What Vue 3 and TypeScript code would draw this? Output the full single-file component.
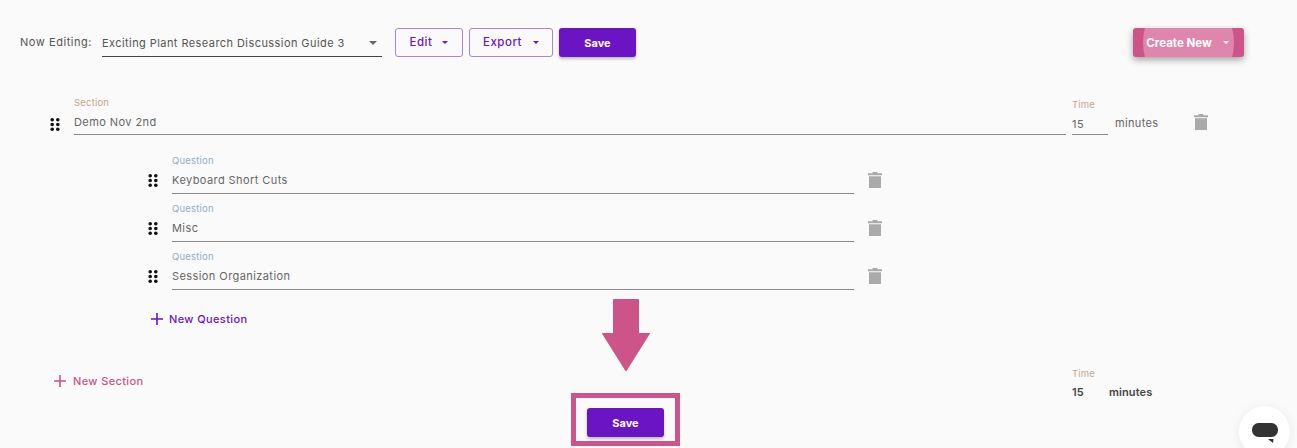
<script setup lang="ts">
const questions: string[] = ['Keyboard Short Cuts', 'Misc', 'Session Organization']
</script>

<template>
  <div class="page">
    <header class="topbar">
      <span class="now">Now Editing:</span>
      <div class="select">
        <span>Exciting Plant Research Discussion Guide 3</span>
        <i class="caret grey"></i>
      </div>
      <button class="btn outline edit">Edit<i class="caret purple"></i></button>
      <button class="btn outline export">Export<i class="caret purple"></i></button>
      <button class="btn solid">Save</button>
      <button class="btn create"><span class="ripple"></span><span class="create-text">Create New</span><i class="caret white"></i></button>
    </header>

    <section class="section-row">
      <svg class="grip" viewBox="0 0 10 13" width="10" height="13"><g fill="#111"><circle cx="2.200" cy="1.800" r="1.800"/><circle cx="7.800" cy="1.800" r="1.800"/><circle cx="2.200" cy="6.500" r="1.800"/><circle cx="7.800" cy="6.500" r="1.800"/><circle cx="2.200" cy="11.200" r="1.800"/><circle cx="7.800" cy="11.200" r="1.800"/></g></svg>
      <div class="field section-field">
        <label class="section-label">Section</label>
        <div class="value">Demo Nov 2nd</div>
      </div>
      <div class="field time-field">
        <label class="section-label">Time</label>
        <div class="value">15</div>
      </div>
      <span class="minutes">minutes</span>
      <svg class="trash section-trash" viewBox="0 0 14 16" width="14" height="16"><path fill="#aaa" d="M5 0h4l.7 1.200H14v2H0v-2h4.300zM1 4.200h12V16H1z"/></svg>
    </section>

    <div class="questions">
      <div v-for="q in questions" :key="q" class="question-row">
        <svg class="grip" viewBox="0 0 10 13" width="10" height="13"><g fill="#111"><circle cx="2.200" cy="1.800" r="1.800"/><circle cx="7.800" cy="1.800" r="1.800"/><circle cx="2.200" cy="6.500" r="1.800"/><circle cx="7.800" cy="6.500" r="1.800"/><circle cx="2.200" cy="11.200" r="1.800"/><circle cx="7.800" cy="11.200" r="1.800"/></g></svg>
        <div class="field question-field">
          <label class="question-label">Question</label>
          <div class="value">{{ q }}</div>
        </div>
        <svg class="trash" viewBox="0 0 14 16" width="14" height="16"><path fill="#aaa" d="M5 0h4l.7 1.200H14v2H0v-2h4.300zM1 4.200h12V16H1z"/></svg>
      </div>
      <button class="add new-question">
        <svg viewBox="0 0 12 12" width="12" height="12"><path d="M6 0v12M0 6h12" stroke="#6a14c4" stroke-width="1.600" fill="none"/></svg>
        New Question
      </button>
    </div>

    <footer class="footer">
      <button class="add new-section">
        <svg viewBox="0 0 12 12" width="12" height="12"><path d="M6 0v12M0 6h12" stroke="#cc5488" stroke-width="1.600" fill="none"/></svg>
        New Section
      </button>
      <div class="total">
        <label class="section-label">Time</label>
        <div class="total-row"><b class="total-num">15</b><b>minutes</b></div>
      </div>
    </footer>

    <svg class="arrow" viewBox="0 0 48 72" width="48" height="72"><path fill="#cc5488" d="M11 1a1 1 0 0 1 1-1h24a1 1 0 0 1 1 1v33h10.500a.5.5 0 0 1 .4.800L24.500 72h-1L.1 34.800a.5.5 0 0 1 .4-.800H11z"/></svg>
    <div class="highlight"><button class="btn solid">Save</button></div>

    <div class="chat">
      <svg viewBox="0 0 26 20" width="26" height="20"><rect width="26" height="14" rx="6.500" fill="#333"/><path fill="#333" d="M16 16h5.500l-.5 4z"/></svg>
    </div>
  </div>
</template>

<style scoped>
.page {
  position: relative;
  width: 1297px;
  height: 448px;
  overflow: hidden;
  background: #fafafa;
  font-family: Inter, "Liberation Sans", sans-serif;
  font-size: 11px;
  color: #666;
  box-sizing: border-box;
}
.topbar {
  display: flex;
  align-items: center;
  height: 29px;
  padding: 28px 53px 0 20px;
}
.now { width: 82px; margin-top: -2px; color: #555; letter-spacing: 0.55px; }
.select {
  width: 280px;
  height: 25px;
  margin-top: 3px;
  box-sizing: border-box;
  border-bottom: 1px solid #444;
  display: flex;
  align-items: center;
  justify-content: space-between;
  padding: 0 5px 2px 0;
  color: #555;
  letter-spacing: 0.43px;
}
.btn {
  height: 29px;
  box-sizing: border-box;
  border-radius: 3px;
  font-family: inherit;
  font-size: 11px;
  font-weight: 500;
  display: inline-flex;
  align-items: center;
  justify-content: center;
  padding: 0;
  border: none;
}
.outline {
  background: transparent;
  border: 1px solid #a883dc;
  color: #6a14c4;
  font-size: 11.500px;
  font-weight: 500;
  letter-spacing: 0.5px;
  gap: 10px;
  padding-bottom: 1px;
}
.edit { width: 68px; margin-left: 13px; }
.export { width: 84px; margin-left: 6px; gap: 11px; }
.solid {
  width: 77px;
  background: #6a14c4;
  color: #fff;
  font-weight: 700;
  box-shadow: 0 2px 3px rgba(0, 0, 0, 0.25);
}
.topbar .solid { margin-left: 6px; }
.create {
  position: relative;
  overflow: hidden;
  width: 111px;
  margin-left: auto;
  padding-right: 2px;
  background: #cc5488;
  color: #fff;
  font-size: 11.500px;
  font-weight: 700;
  gap: 11px;
  box-shadow: 0 3px 7px rgba(0, 0, 0, 0.35);
}
.ripple {
  position: absolute;
  left: 10px;
  top: -36px;
  width: 91px;
  height: 101px;
  border-radius: 50%;
  background: #e085ab;
}
.create-text, .create .caret { position: relative; }
.caret {
  display: inline-block;
  width: 0;
  height: 0;
  border-left: 3.500px solid transparent;
  border-right: 3.500px solid transparent;
  border-top: 3.500px solid currentColor;
}
.caret.grey { color: #666; border-left-width: 4.500px; border-right-width: 4.500px; border-top-width: 4.500px; }
.caret.purple { color: #6a14c4; }
.caret.white { color: #fff; }

.section-row {
  display: flex;
  align-items: flex-start;
  margin-top: 40px;
  padding-left: 50px;
}
.grip { flex: none; margin-top: 21px; }
.field { display: flex; flex-direction: column; box-sizing: border-box; border-bottom: 1px solid #8a8a8a; }
.section-field { width: 992px; margin-left: 14px; height: 38px; }
.time-field { width: 36px; margin-left: 6px; height: 38px; padding-top: 2px; }
label { font-size: 9.500px; line-height: 12px; letter-spacing: 0.2px; }
.section-label { color: #c4a78e; }
.question-label { color: #8fb0c8; }
.value { margin-top: 6px; line-height: 14px; color: #666; letter-spacing: 0.42px; }
.minutes { margin: 19px 0 0 7px; color: #666; letter-spacing: 0.35px; width: 50px; }
.trash { flex: none; }
.section-trash { margin: 17px 0 0 29px; }

.questions { margin: 0 0 0 148px; padding-top: 20px; }
.question-row { display: flex; align-items: flex-start; height: 48px; }
.question-row .grip { margin-top: 19px; }
.question-field { width: 682px; margin-left: 14px; height: 39px; }
.question-row .trash { margin-left: 14px; margin-top: 17px; }
.add {
  display: flex;
  align-items: center;
  gap: 6px;
  background: none;
  border: none;
  padding: 0;
  font-family: inherit;
  font-size: 11px;
  font-weight: 500;
  letter-spacing: 0.38px;
}
.new-question { color: #6a14c4; margin: 10px 0 0 3px; height: 20px; }

.footer {
  display: flex;
  justify-content: space-between;
  align-items: flex-start;
  margin-top: 33px;
  padding: 0 0 0 54px;
}
.new-section { color: #cc5488; margin-top: 9px; height: 20px; gap: 7px; }
.total { width: 225px; margin-top: 6px; }
.total label { display: block; color: #c4a78e; }
.total-row { display: flex; margin-top: 5px; color: #444; letter-spacing: 0.1px; }
.total-num { width: 37px; }
.total-row b { font-weight: 600; }

.arrow { position: absolute; left: 602px; top: 299px; }
.highlight {
  position: absolute;
  left: 571px;
  top: 393px;
  width: 109px;
  height: 53px;
  box-sizing: border-box;
  border: 5px solid #cc5488;
  display: flex;
  align-items: flex-start;
  justify-content: center;
  padding-top: 10px;
}
.chat {
  position: absolute;
  left: 1239px;
  top: 406px;
  width: 51px;
  height: 51px;
  border-radius: 50%;
  background: #fff;
  box-shadow: 0 2px 12px rgba(0, 0, 0, 0.08);
  display: flex;
  align-items: flex-start;
  justify-content: center;
  padding-top: 17px;
  box-sizing: border-box;
}
</style>
